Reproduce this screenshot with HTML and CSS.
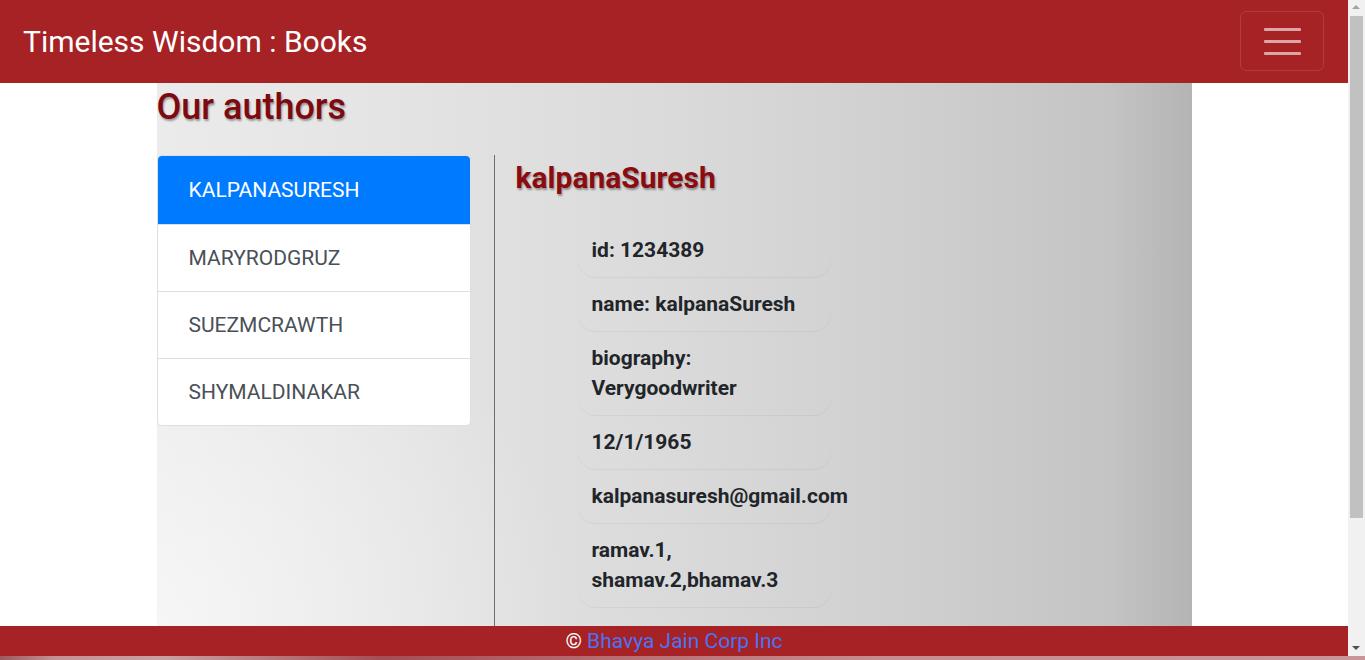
FILE: index.html
```html
<!DOCTYPE html>
<html lang="en">
<head>
<meta charset="utf-8">
<title>Timeless Wisdom : Books</title>
<link rel="stylesheet" href="styles.css">
</head>
<body>
<div class="page">
  <header class="navbar">
    <a class="brand" href="#">Timeless Wisdom : Books</a>
    <button class="toggler" type="button" aria-label="Toggle navigation">
      <span class="bar"></span><span class="bar"></span><span class="bar"></span>
    </button>
  </header>
  <main class="container">
    <h2 class="page-title">Our authors</h2>
    <div class="row">
      <ul class="list-group">
        <li class="list-item active">KALPANASURESH</li>
        <li class="list-item">MARYRODGRUZ</li>
        <li class="list-item">SUEZMCRAWTH</li>
        <li class="list-item">SHYMALDINAKAR</li>
      </ul>
      <section class="detail">
        <h3 class="detail-title">kalpanaSuresh</h3>
        <ul class="facts">
          <li class="fact">id: 1234389</li>
          <li class="fact">name: kalpanaSuresh</li>
          <li class="fact">biography: Verygoodwriter</li>
          <li class="fact">12/1/1965</li>
          <li class="fact">kalpanasuresh@gmail.com</li>
          <li class="fact">ramav.1, shamav.2,bhamav.3</li>
        </ul>
      </section>
    </div>
  </main>
  <footer class="footer">
    <span class="copy">&copy;</span> <a class="footer-link" href="#">Bhavya Jain Corp Inc</a>
  </footer>
</div>
<div class="below"></div>
<div class="scrollbar" aria-hidden="true">
  <div class="sb-arrow sb-up"></div>
  <div class="sb-track"><div class="sb-thumb"></div></div>
  <div class="sb-arrow sb-down"></div>
</div>
</body>
</html>
```
FILE: styles.css
```css
html, body {
  margin: 0;
  padding: 0;
}
body {
  font-family: Roboto, "Liberation Sans", Arial, sans-serif;
  background: #ffffff;
  color: #212529;
}
.page {
  margin-right: 17px;
}
.navbar {
  height: 83px;
  background: #a62224;
  display: flex;
  align-items: center;
  justify-content: space-between;
  padding: 0 24px 0 23px;
  box-sizing: border-box;
}
.brand {
  color: #ffffff;
  text-decoration: none;
  font-size: 30px;
  line-height: 36px;
  font-weight: 400;
}
.toggler {
  width: 84px;
  height: 60px;
  background: transparent;
  border: 1px solid rgba(255, 255, 255, 0.12);
  border-radius: 6px;
  display: flex;
  flex-direction: column;
  align-items: center;
  justify-content: center;
  gap: 9px;
  padding: 0;
  margin-top: -1px;
}
.bar {
  display: block;
  width: 37px;
  height: 3px;
  border-radius: 1px;
  background: rgba(255, 255, 255, 0.6);
}
.container {
  width: 1035px;
  margin: 0 auto;
  height: 543px;
  box-sizing: border-box;
  display: flex;
  flex-direction: column;
  background:
    radial-gradient(ellipse 420px 380px at 0% 100%, rgba(255, 255, 255, 0.55), rgba(255, 255, 255, 0) 100%),
    linear-gradient(to right, #ebebeb 0%, #e3e3e3 25%, #dadada 50%, #cecece 75%, #c4c4c4 92%, #b4b4b4 100%);
}
.page-title {
  margin: 0;
  padding-top: 4px;
  font-size: 36px;
  line-height: 40px;
  font-weight: 500;
  color: #7d0a10;
  text-shadow: 1px 2px 2px rgba(0, 0, 0, 0.35);
  height: 68px;
}
.row {
  flex: 1;
  display: flex;
  align-items: stretch;
}
.list-group {
  list-style: none;
  margin: 0;
  padding: 0;
  width: 314px;
  align-self: flex-start;
  background: #ffffff;
  border: 1px solid rgba(0, 0, 0, 0.125);
  border-radius: 5px;
  overflow: hidden;
  box-sizing: border-box;
}
.list-item {
  padding: 18px 31px 18px;
  font-size: 21px;
  line-height: 30px;
  color: #495057;
  border-top: 1px solid rgba(0, 0, 0, 0.125);
}
.list-item:first-child {
  border-top: 0;
  padding-top: 19px;
  padding-bottom: 19px;
}
.list-item.active {
  background: #007bff;
  color: #ffffff;
}
.detail {
  margin-left: 23px;
  border-left: 1px solid #6e6e6e;
  padding-left: 21px;
  flex: 1;
}
.detail-title {
  margin: 0;
  padding-top: 4px;
  font-size: 30px;
  line-height: 38px;
  font-weight: 700;
  color: #8a0c10;
  text-shadow: 1px 2px 2px rgba(0, 0, 0, 0.35);
}
.facts {
  list-style: none;
  margin: 26px 0 0;
  padding: 0 0 0 62px;
}
.fact {
  width: 253px;
  box-sizing: border-box;
  padding: 12px 14px;
  font-size: 21px;
  line-height: 30px;
  font-weight: 700;
  color: #212529;
  border-radius: 18px;
  box-shadow: 0 1px 1px rgba(0, 0, 0, 0.05);
}
.footer {
  height: 30px;
  background: #a62224;
  text-align: center;
  font-size: 21px;
  line-height: 30px;
  color: #ffffff;
}
.footer-link {
  color: #4a73f5;
  text-decoration: none;
}
.below {
  height: 166px;
  background: linear-gradient(to right, #9c5a5e 0%, #c49295 4%, #c9a0a2 12%, #a44e55 28%, #b76d72 45%, #c68e90 65%, #c99599 100%);
}
.scrollbar {
  position: fixed;
  top: 0;
  right: 0;
  width: 17px;
  height: 656px;
  background: #f1f1f1;
  display: flex;
  flex-direction: column;
}
.sb-arrow {
  height: 16px;
  flex: none;
  position: relative;
}
.sb-up::after,
.sb-down::after {
  content: "";
  position: absolute;
  left: 4px;
  border-left: 4px solid transparent;
  border-right: 4px solid transparent;
}
.sb-up::after {
  top: 5px;
  border-bottom: 4px solid #a3a3a3;
}
.sb-down::after {
  top: 6px;
  border-top: 4px solid #505050;
}
.sb-track {
  flex: 1;
  padding: 0 2px;
}
.sb-thumb {
  height: 502px;
  background: #c1c1c1;
}
```
